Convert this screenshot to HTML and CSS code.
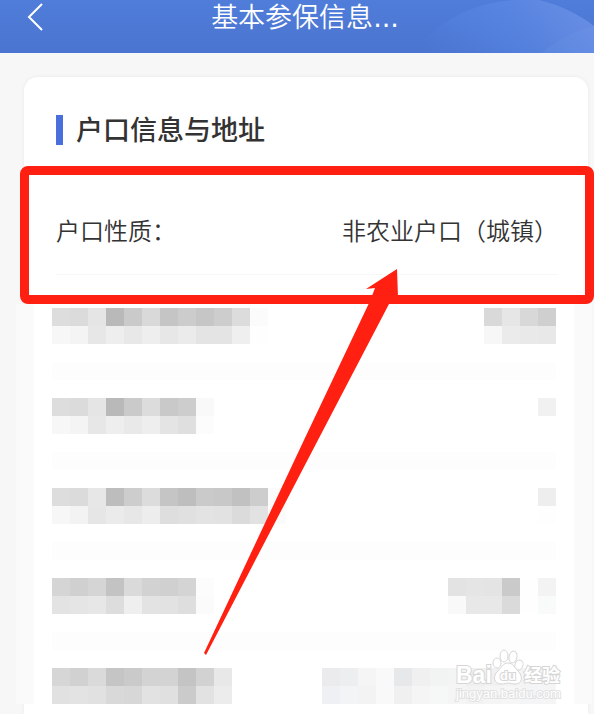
FILE: index.html
```html
<!DOCTYPE html>
<html lang="zh-CN">
<head>
    <meta charset="UTF-8">
    <meta name="viewport" content="width=device-width, initial-scale=1.0">
    <title>基本参保信息</title>
    <link rel="stylesheet" href="styles.css">
</head>
<body>
    <header class="header">
        <svg class="header-bg" width="200" height="53" viewBox="0 0 200 53" aria-hidden="true">
            <defs>
                <linearGradient id="soft" x1="0" y1="0.6" x2="1" y2="0.4">
                    <stop offset="0" stop-color="#5b8ae6" stop-opacity="0"/>
                    <stop offset="0.5" stop-color="#5b8ae6" stop-opacity="0.5"/>
                    <stop offset="1" stop-color="#7396ea" stop-opacity="0.7"/>
                </linearGradient>
            </defs>
            <path d="M18 53C40 25 75 3 120 0H145C165 5 183 13 200 26V53Z" fill="url(#soft)"/>
            <path d="M148 53C162 41 180 31 200 26V53Z" fill="#7c9fee" opacity="0.15"/>
        </svg>
        <button class="back" type="button" aria-label="返回">
            <svg width="18" height="30" viewBox="0 0 18 30" fill="none" stroke="#fff" stroke-width="2">
                <path d="M16 3L3 16L16 29"/>
            </svg>
        </button>
        <h1>基本参保信息<span class="dots">...</span></h1>
    </header>

    <main class="page">
        <section class="card">
            <h2 class="title">户口信息与地址</h2>

            <div class="highlight">
                <dl class="row">
                    <dt>户口性质：</dt>
                    <dd>非农业户口（城镇）</dd>
                </dl>
                <svg class="arrow" width="200" height="390" viewBox="0 0 200 390" aria-hidden="true">
                    <path d="M194 2L163 22L172 21L167 34L101 173L1 386L3 388L115 173L186 37L195 30Z" fill="#ff2012"/>
                </svg>
            </div>

            <div class="masked-list" id="masked-list"></div>
        </section>

        <svg class="watermark" width="116" height="60" viewBox="0 0 116 60">
            <g class="watermark-text">
                <text class="logo" x="4" y="37">Bai</text>
                <text class="cn" x="72" y="36">经验</text>
                <text class="url" x="4" y="52">jingyan.baidu.com</text>
            </g>
            <g fill="#fff" stroke="#d6d6d6" stroke-width="1">
                <ellipse cx="45" cy="17" rx="4" ry="5"/>
                <ellipse cx="52" cy="10" rx="4" ry="6"/>
                <ellipse cx="61" cy="11" rx="4" ry="6" transform="rotate(12 61 11)"/>
                <ellipse cx="67" cy="19" rx="4" ry="5" transform="rotate(20 67 19)"/>
                <path d="M56 17C51 17 49 22 46 25C40 30 42 38 49 38C53 38 54 37 56 37C58 37 60 38 63 38C71 38 71 30 66 25C63 22 61 17 56 17Z"/>
            </g>
            <g class="watermark-text">
                <text class="du" x="48" y="34">du</text>
            </g>
        </svg>
    </main>

    <script src="script.js"></script>
</body>
</html>
```
FILE: styles.css
```css
* {
    margin: 0;
    padding: 0;
    box-sizing: border-box;
}

body {
    display: flex;
    flex-direction: column;
    min-height: 100vh;
    font-family: "Noto Sans CJK SC", sans-serif;
    color: #333;
    background: #f7f7f7;
}

.header {
    position: relative;
    display: flex;
    align-items: flex-start;
    height: 53px;
    padding-left: 26px;
    background: linear-gradient(#507dda, #4a75d0);
}

.header-bg {
    position: absolute;
    top: 0;
    right: 0;
}

.back {
    position: relative;
    height: 32px;
    border: none;
    background: none;
}

.back svg {
    display: block;
}

.header h1 {
    position: relative;
    flex: 1;
    padding-right: 28px;
    text-align: center;
    font-size: 27px;
    font-weight: 350;
    line-height: 32px;
    color: #fff;
}

.header .dots {
    font-family: "DejaVu Sans", sans-serif;
    font-weight: 400;
}

.page {
    position: relative;
    display: flex;
    flex: 1;
    flex-direction: column;
    padding: 24px 6px 0 24px;
}

.card {
    flex: 1;
    padding-top: 38px;
    border-radius: 14px 14px 0 0;
    background: #fff;
    box-shadow: 0 0 4px rgba(0, 0, 0, 0.06);
}

.title {
    display: flex;
    gap: 13px;
    height: 30px;
    margin: 0 32px 21px;
    font-size: 27px;
    font-weight: 500;
    line-height: 28px;
}

.title::before {
    content: "";
    width: 7px;
    height: 30px;
    background: #4a6fdc;
}

.highlight {
    position: relative;
    z-index: 1;
    height: 138px;
    padding: 49px 30px 0 32px;
}

/* red frame, slightly wider than the card */
.highlight::after {
    content: "";
    position: absolute;
    inset: 0 -6px 0 -4px;
    border: 9px solid #ff2012;
    border-radius: 8px;
}

.row {
    display: flex;
    justify-content: space-between;
    padding-bottom: 29px;
    border-bottom: 1px solid #f7f7f7;
    font-size: 24px;
    font-weight: 350;
    line-height: 30px;
}

.arrow {
    position: absolute;
    top: 101px;
    right: 185px;
    z-index: 1;
}

.masked-list {
    margin: 0 -4px 0 -8px;
    padding: 4px 18px 0;
    border: solid #fafafa;
    border-width: 0 18px;
}

.masked-row {
    display: flex;
    justify-content: space-between;
}

.mosaic {
    display: grid;
    grid-auto-rows: 18px;
}

.band {
    height: 18px;
    margin: 18px 0;
    background: #fdfdfd;
}

.watermark {
    position: absolute;
    right: 26px;
    bottom: 8px;
    z-index: 2;
}

.watermark-text {
    fill: #fff;
    stroke: #d6d6d6;
    stroke-width: 2px;
    paint-order: stroke;
    font-family: "Liberation Sans", "Noto Sans CJK SC", sans-serif;
    font-weight: 700;
}

.watermark-text .logo {
    font-size: 23px;
}

.watermark-text .du {
    font-size: 13px;
}

.watermark-text .cn {
    font-size: 18px;
}

.watermark-text .url {
    font-size: 13px;
    font-weight: 400;
    stroke: #e2e2e2;
}
```
FILE: script.js
```js
// Grey levels of the masked values, two lines of cells per block
const rows = [
    {
        left: ['dd db e5 b9 ca d9 c5 cc c6 cd dc fb', 'f7 f4 e7 ee e8 ee e7 eb e4 e4 ef fe'],
        right: ['d9 e6 d8 cf', 'f7 eb e9 e8']
    },
    {
        left: ['dd db e5 b9 ca dc c9 cd f9', 'f7 f4 e7 ee e9 ee e4 df fc'],
        right: ['f1', 'ff']
    },
    {
        left: ['dd db e7 bd cd dc c5 be ca c8 c1 cd fb', 'f7 f3 e6 eb e7 ed de e0 e3 e2 db e2 fb'],
        right: ['ee', 'fe']
    },
    {
        left: ['d5 d0 d5 c3 da d2 d0 d4 fc', 'e3 e5 e7 dd ef e3 e2 de fb'],
        right: ['e3 e5 e4 ca fe f3', 'f9 e8 e8 da fe f9fbfa']
    },
    {
        left: ['d6 d1 da c5 ca d3 d3 c4 d2 e8', 'e1 e3 e1 d9 d7 e2 e0 cb e2 ec'],
        right: [
            'ebebed edeef0 f5 f9 e7e8ea f0 f2f4f3 f3f5f4 ef f1 f3 f4 f5',
            'eef0f3 f2f4f6 f3 f9 f0 f5 f6f8f7 f5 f3 f5 f6 f4f5f7 f5'
        ]
    }
];

function mosaic(lines) {
    const cells = lines.map(line => line.split(' '));
    const html = cells.flat().map(c => {
        const color = c.length === 2 ? c.repeat(3) : c;
        return `<i style="background:#${color}"></i>`;
    }).join('');
    return `<div class="mosaic" style="grid-template-columns:repeat(${cells[0].length}, 18px)">${html}</div>`;
}

document.getElementById('masked-list').innerHTML = rows
    .map(row => `<div class="masked-row">${mosaic(row.left)}${mosaic(row.right)}</div>`)
    .join('<div class="band"></div>');
```
